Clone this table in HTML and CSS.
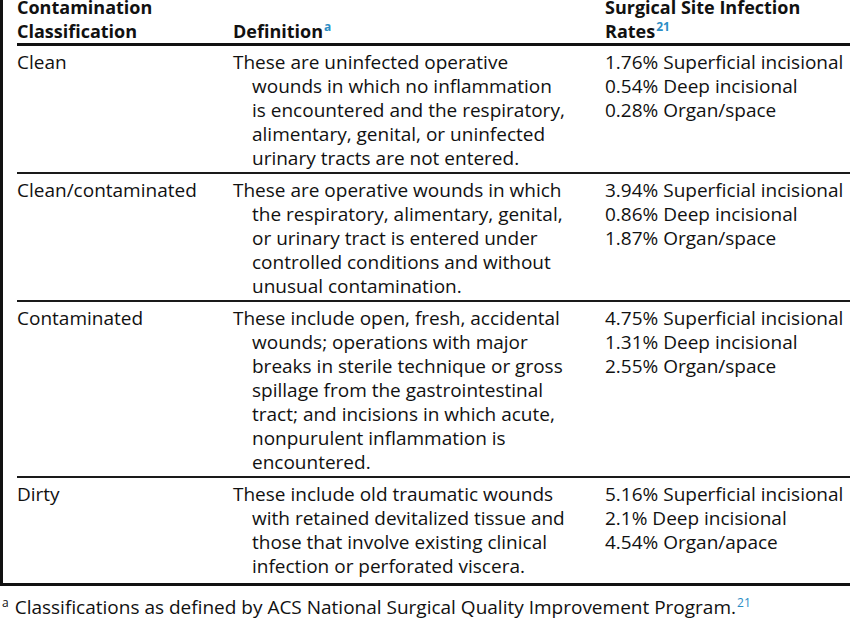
FILE: index.html
```html
<!DOCTYPE html>
<html lang="en">
<head>
<meta charset="utf-8">
<title>Contamination Classification</title>
<link rel="stylesheet" href="styles.css">
</head>
<body>
<div class="frame">
  <table class="ssi">
    <colgroup>
      <col class="c1">
      <col class="c2">
      <col class="c3">
    </colgroup>
    <thead>
      <tr>
        <th>Contamination<br>Classification</th>
        <th>Definition<sup class="ref">a</sup></th>
        <th>Surgical Site Infection<br>Rates<sup class="ref">21</sup></th>
      </tr>
    </thead>
    <tbody>
      <tr>
        <td>Clean</td>
        <td class="def">These are uninfected operative<br>wounds in which no inflammation<br>is encountered and the respiratory,<br>alimentary, genital, or uninfected<br>urinary tracts are not entered.</td>
        <td>1.76% Superficial incisional<br>0.54% Deep incisional<br>0.28% Organ/space</td>
      </tr>
      <tr>
        <td>Clean/contaminated</td>
        <td class="def">These are operative wounds in which<br>the respiratory, alimentary, genital,<br>or urinary tract is entered under<br>controlled conditions and without<br>unusual contamination.</td>
        <td>3.94% Superficial incisional<br>0.86% Deep incisional<br>1.87% Organ/space</td>
      </tr>
      <tr>
        <td>Contaminated</td>
        <td class="def">These include open, fresh, accidental<br>wounds; operations with major<br>breaks in sterile technique or gross<br>spillage from the gastrointestinal<br>tract; and incisions in which acute,<br>nonpurulent inflammation is<br>encountered.</td>
        <td>4.75% Superficial incisional<br>1.31% Deep incisional<br>2.55% Organ/space</td>
      </tr>
      <tr class="last">
        <td>Dirty</td>
        <td class="def">These include old traumatic wounds<br>with retained devitalized tissue and<br>those that involve existing clinical<br>infection or perforated viscera.</td>
        <td>5.16% Superficial incisional<br>2.1% Deep incisional<br>4.54% Organ/apace</td>
      </tr>
    </tbody>
  </table>
</div>
<p class="note"><sup class="mark">a</sup>Classifications as defined by ACS National Surgical Quality Improvement Program.<sup class="ref">21</sup></p>
</body>
</html>
```

FILE: styles.css
```css
html, body {
  margin: 0;
  padding: 0;
  background: #ffffff;
}

body {
  width: 850px;
  overflow: hidden;
  font-family: "Open Sans", "Noto Sans", "Liberation Sans", sans-serif;
  font-size: 19px;
  line-height: 24px;
  color: #111111;
}

.frame {
  margin-top: -5px;
  width: 900px;
  border-left: 3px solid #111111;
  border-bottom: 3px solid #111111;
  padding-left: 14px;
}

.ssi {
  border-collapse: collapse;
  table-layout: fixed;
  width: 886px;
}

.c1 { width: 216px; }
.c2 { width: 372px; }
.c3 { width: 298px; }

.ssi th,
.ssi td {
  padding: 0;
  text-align: left;
  vertical-align: top;
  white-space: nowrap;
}

.ssi th {
  font-size: 18px;
  font-weight: 700;
  vertical-align: bottom;
}

.ssi thead tr {
  border-bottom: 3px solid #111111;
}

.ssi td {
  padding-top: 4px;
  padding-bottom: 2px;
}

.ssi tbody tr {
  border-bottom: 2px solid #1a1a1a;
}

.ssi tbody tr.last {
  border-bottom: none;
}

.ssi tbody tr.last td {
  padding-bottom: 5px;
}

.def {
  padding-left: 19px !important;
  text-indent: -19px;
}

sup {
  font-size: 12px;
  line-height: 0;
  vertical-align: 7px;
}

.ref {
  color: #2a8dc5;
  margin-left: 1px;
}

.note {
  margin: 9px 0 0 0;
  padding-left: 17px;
  text-indent: -15px;
}

.mark {
  color: #111111;
  margin-right: 6px;
}
```
